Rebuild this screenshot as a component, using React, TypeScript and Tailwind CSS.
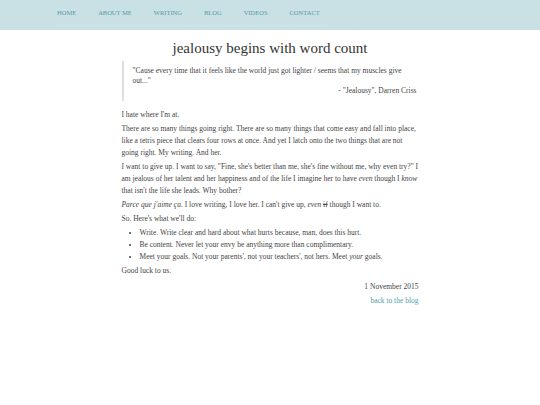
import React from 'react'

const nav = ['Home', 'About Me', 'Writing', 'Blog', 'Videos', 'Contact']

export default function App() {
  return (
    <div className="min-h-[405px] bg-white text-[#444]" style={{ fontFamily: '"Liberation Serif", "DejaVu Serif", serif' }}>
      {/* Header */}
      <header className="h-[30px] bg-[#c9e0e4]">
        <nav className="ml-[57px] flex h-[26px] w-[270px] items-center border-b border-[#d3e6ea]">
          {nav.map((item, i) => (
            <a
              key={item}
              href="#"
              className={`text-[6.5px] uppercase text-[#5b9aa4] ${i < nav.length - 1 ? 'mr-[22px]' : ''}`}
            >
              {item}
            </a>
          ))}
        </nav>
      </header>

      <main className="mx-auto w-[297px] pt-[9px] text-[7.5px] leading-[12px]">
        <h1 className="text-center text-[15px] leading-[18px] text-[#333]">jealousy begins with word count</h1>

        {/* Quote */}
        <blockquote className="mt-[4px] border-l-[2px] border-[#dedede] py-[5px] pl-[9px] pr-[2px] leading-[10px]">
          <p>"Cause every time that it feels like the world just got lighter / seems that my muscles give out..."</p>
          <p className="text-right">- "Jealousy", Darren Criss</p>
        </blockquote>

        <div className="mt-[8px] flex flex-col gap-[2px]">
          <p>I hate where I'm at.</p>
          <p>
            There are so many things going right. There are so many things that come easy and fall into place, like a tetris
            piece that clears four rows at once. And yet I latch onto the two things that are not going right. My writing. And
            her.
          </p>
          <p>
            I want to give up. I want to say, "Fine, she's better than me, she's fine without me, why even try?" I am jealous of
            her talent and her happiness and of the life I imagine her to have <em>even</em> though I <em>know</em> that isn't
            the life she leads. Why bother?
          </p>
          <p>
            <em>Parce que j'aime ça.</em> I love writing, I love her. I can't give up, <em>even</em> <s>if</s> though I want to.
          </p>
          <p>So. Here's what we'll do:</p>
          <ul className="list-disc pl-[18px]">
            <li>Write. Write clear and hard about what hurts because, man, does this hurt.</li>
            <li>Be content. Never let your envy be anything more than complimentary.</li>
            <li>
              Meet your goals. Not your parents', not your teachers', not hers. Meet <em>your</em> goals.
            </li>
          </ul>
          <p>Good luck to us.</p>
          <p className="mt-[2px] text-right">1 November 2015</p>
          <p className="text-right">
            <a href="#" className="text-[#4f9faa]">back to the blog</a>
          </p>
        </div>
      </main>
    </div>
  )
}
